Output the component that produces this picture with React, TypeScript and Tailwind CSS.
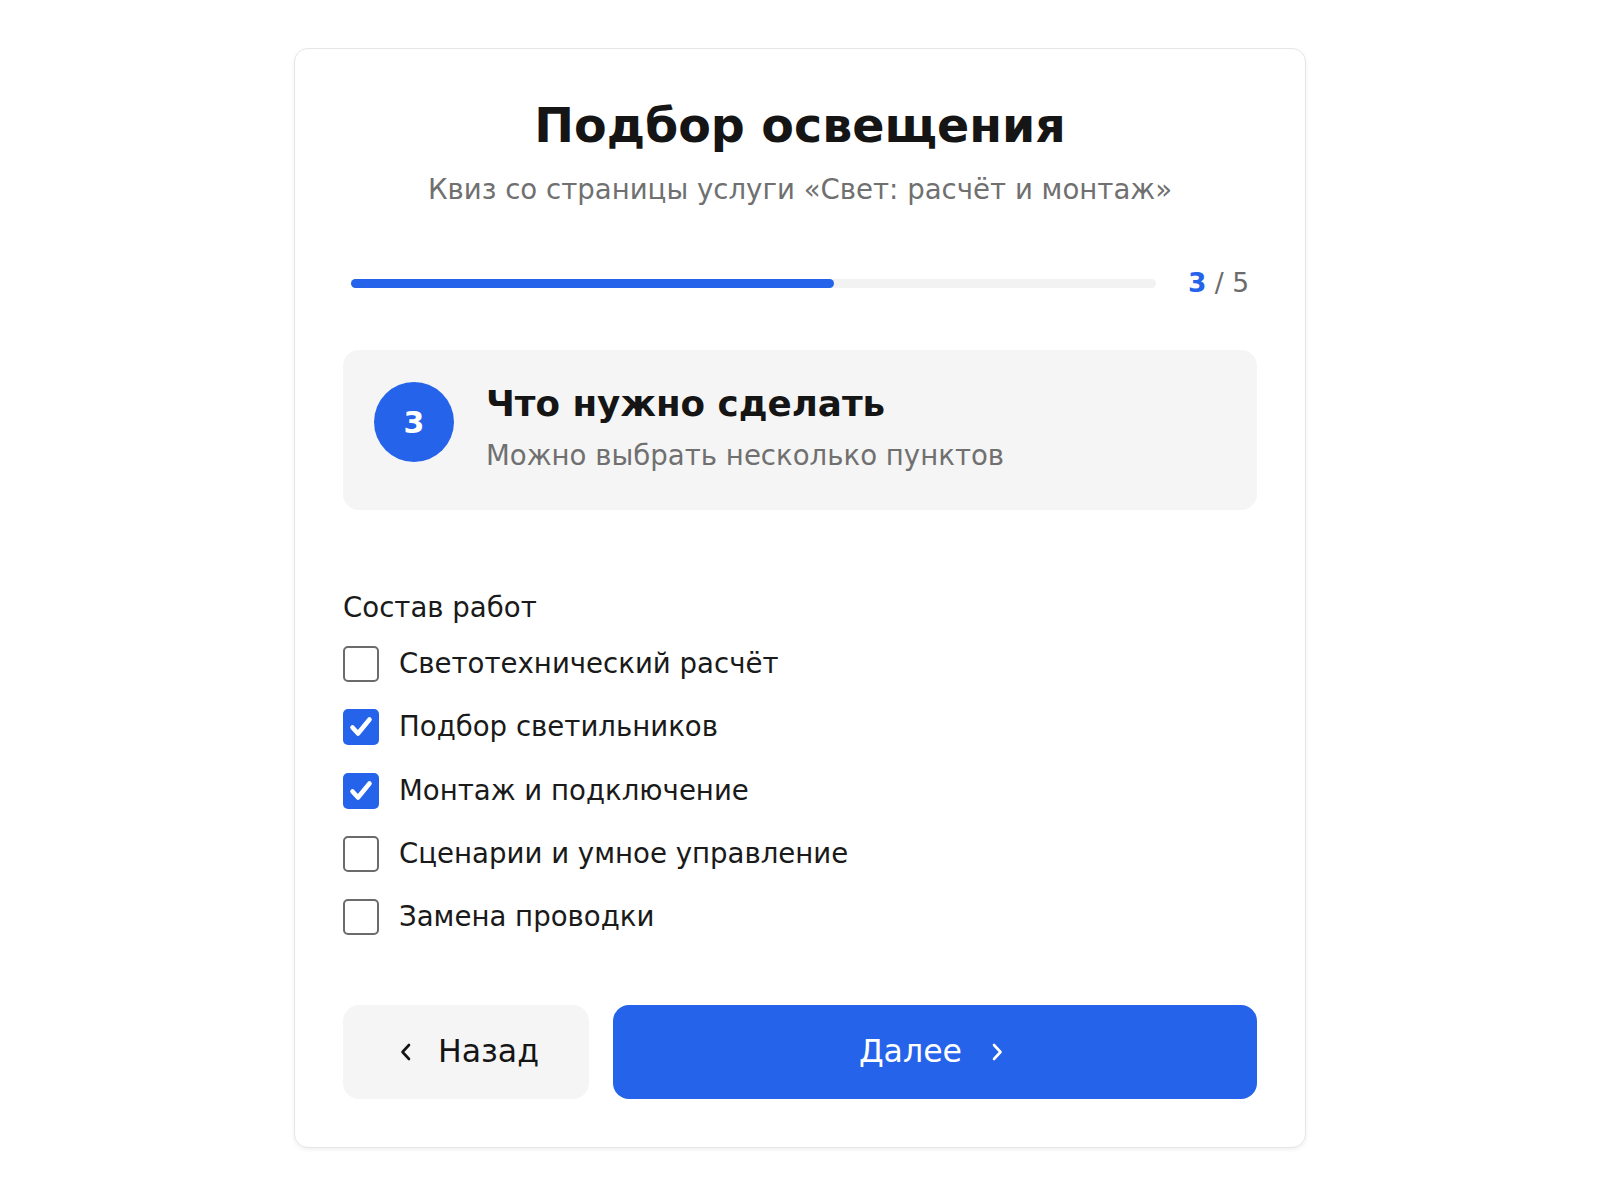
import { useState } from "react";

const OPTIONS = [
  "Светотехнический расчёт",
  "Подбор светильников",
  "Монтаж и подключение",
  "Сценарии и умное управление",
  "Замена проводки",
];

function Chevron({ dir }: { dir: "left" | "right" }) {
  return (
    <svg width="14" height="22" viewBox="0 0 14 22" fill="none">
      <path
        d={dir === "left" ? "M10 4 L3.5 11 L10 18" : "M4 4 L10.5 11 L4 18"}
        stroke="currentColor"
        strokeWidth="2.6"
        strokeLinecap="round"
        strokeLinejoin="round"
      />
    </svg>
  );
}

export default function App() {
  const [checked, setChecked] = useState<boolean[]>([false, true, true, false, false]);

  const toggle = (i: number) =>
    setChecked((prev) => prev.map((v, j) => (j === i ? !v : v)));

  return (
    <div className="min-h-[1194px] bg-white pt-12 font-['DejaVu_Sans',sans-serif]">
      <div className="mx-auto w-[1012px] rounded-[14px] border border-[#e6e6e6] bg-white px-12 pt-[49px] pb-12 shadow-[0_2px_4px_rgba(0,0,0,0.06)]">
        <h1 className="text-center text-[47.5px] font-bold leading-[56px] text-[#151515]">
          Подбор освещения
        </h1>
        <p className="mt-[18px] text-center text-[27.6px] leading-[36px] text-[#707070]">
          Квиз со страницы услуги «Свет: расчёт и монтаж»
        </p>

        <div className="mt-[59px] flex items-center gap-8 px-2">
          <div className="h-[9px] flex-1 rounded-full bg-[#f2f2f2]">
            <div className="h-full w-[60%] rounded-full bg-[#2563eb]" />
          </div>
          <div className="text-[26.5px] leading-[32px] text-[#6b6b6b]">
            <span className="font-bold text-[#2563eb]">3</span> / 5
          </div>
        </div>

        <div className="mt-[51px] flex items-start gap-[32px] rounded-[16px] bg-[#f5f5f5] px-[31px] pt-[32px] pb-[34px]">
          <div className="flex h-[80px] w-[80px] shrink-0 items-center justify-center rounded-full bg-[#2563eb] text-[30px] font-bold text-white">
            3
          </div>
          <div className="flex flex-col">
            <div className="text-[35.7px] font-bold leading-[44px] text-[#151515]">
              Что нужно сделать
            </div>
            <div className="mt-[10px] text-[27.6px] leading-[40px] text-[#707070]">
              Можно выбрать несколько пунктов
            </div>
          </div>
        </div>

        <div className="mt-[80px] text-[27.6px] leading-[36px] text-[#1a1a1a]">Состав работ</div>
        <div className="mt-[20px] flex flex-col gap-[27.3px]">
          {OPTIONS.map((label, i) => (
            <label
              key={label}
              className="flex h-[36px] cursor-pointer items-center gap-[20px]"
              onClick={() => toggle(i)}
            >
              {checked[i] ? (
                <span className="flex h-[36px] w-[36px] items-center justify-center rounded-[5px] bg-[#2563eb]">
                  <svg width="36" height="36" viewBox="0 0 36 36" fill="none">
                    <path
                      d="M9.5 18.5 L15 24.5 L26.5 10.5"
                      stroke="white"
                      strokeWidth="4.6"
                      strokeLinecap="round"
                      strokeLinejoin="round"
                    />
                  </svg>
                </span>
              ) : (
                <span className="h-[36px] w-[36px] rounded-[5px] border-2 border-[#6b6b6b] bg-white" />
              )}
              <span className="text-[27.6px] leading-[36px] text-[#1a1a1a]">{label}</span>
            </label>
          ))}
        </div>

        <div className="mt-[70px] flex gap-[24px]">
          <button className="flex h-[94px] w-[246px] items-center justify-center gap-[25px] rounded-[16px] bg-[#f5f5f5] pl-[6px] text-[31.6px] text-[#151515]">
            <Chevron dir="left" />
            Назад
          </button>
          <button className="flex h-[94px] flex-1 items-center justify-center gap-[28px] rounded-[16px] bg-[#2563eb] pr-[7px] text-[31.6px] text-white">
            Далее
            <Chevron dir="right" />
          </button>
        </div>
      </div>
    </div>
  );
}
